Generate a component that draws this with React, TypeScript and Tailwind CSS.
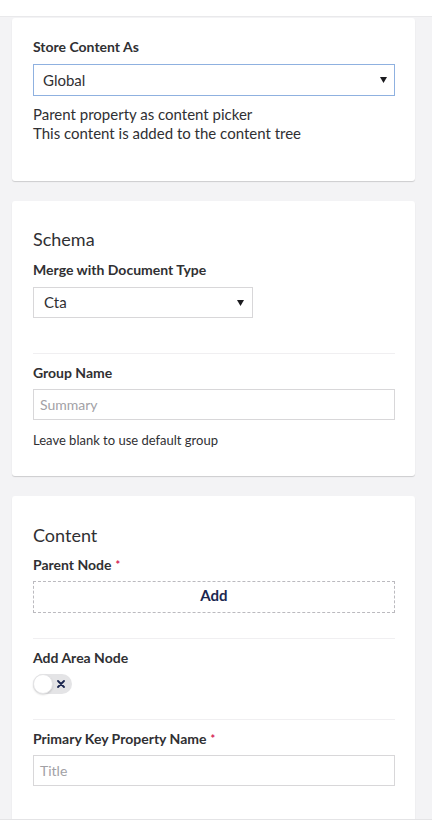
import React from "react";

const font = { fontFamily: "Lato, 'Open Sans', Arial, sans-serif" };

function Card({ children, className }: { children: React.ReactNode; className?: string }) {
  return (
    <div className={"mx-[12px] w-[403px] rounded-[3px] bg-white pl-[21px] pr-[20px] shadow-[0_1px_1px_rgba(0,0,0,0.16)] flex flex-col " + (className ?? "")}>
      {children}
    </div>
  );
}

function Label({ text, required, className }: { text: string; required?: boolean; className?: string }) {
  return (
    <div className={"text-[14px] leading-[20px] font-bold text-[#303033] " + (className ?? "")}>
      {text}
      {required && <span className="ml-[4px] text-[#d42054] font-bold text-[11px] align-top">*</span>}
    </div>
  );
}

function Caret() {
  return (
    <svg width="7" height="6" viewBox="0 0 7 6">
      <path d="M0 0 H7 L3.5 6 Z" fill="#1b1b1f" />
    </svg>
  );
}

function Divider({ className }: { className?: string }) {
  return <div className={"h-px w-full bg-[#f0eff1] " + (className ?? "")} />;
}

export default function App() {
  return (
    <div style={font} className="h-[828px] w-[432px] overflow-hidden flex flex-col bg-[#f3f3f5]">
      <div className="h-[17px] shrink-0 bg-white border-b border-[#e9e9eb]" />
      <div className="flex-1 overflow-hidden flex flex-col pt-[1px]">
        <Card className="pt-[19px] pb-[38px] shrink-0">
          <Label text="Store Content As" />
          <div className="mt-[7px] h-[32px] w-[362px] border border-[#8fb1e0] flex items-center justify-between pl-[9px] pr-[7px]">
            <span className="text-[15px] text-[#303033]">Global</span>
            <Caret />
          </div>
          <div className="mt-[9px] text-[15px] leading-[19px] text-[#303033]">
            <div>Parent property as content picker</div>
            <div>This content is added to the content tree</div>
          </div>
        </Card>

        <Card className="mt-[20px] pt-[26px] pb-[27px] shrink-0">
          <div className="text-[18px] leading-[24px] text-[#303033]">Schema</div>
          <Label text="Merge with Document Type" className="mt-[9px]" />
          <div className="mt-[7px] h-[31px] w-[220px] border border-[#d8d7d9] flex items-center justify-between pl-[10px] pr-[8px]">
            <span className="text-[15px] text-[#303033]">Cta</span>
            <Caret />
          </div>
          <Divider className="mt-[35px]" />
          <Label text="Group Name" className="mt-[9px]" />
          <div className="mt-[6px] h-[31px] w-[362px] border border-[#d8d7d9] flex items-center pl-[6px]">
            <span className="text-[14px] text-[#a2a1a6]">Summary</span>
          </div>
          <div className="mt-[11px] text-[13px] leading-[18px] text-[#303033]">Leave blank to use default group</div>
        </Card>

        <Card className="mt-[20px] pt-[27px] pb-[40px] shrink-0">
          <div className="text-[18px] leading-[24px] text-[#303033]">Content</div>
          <Label text="Parent Node" required className="mt-[8px]" />
          <div className="mt-[6px] h-[32px] w-[362px] border border-dashed border-[#bbbabf] flex items-center justify-center pb-[3px]">
            <span className="text-[15px] font-bold text-[#1b264f]">Add</span>
          </div>
          <Divider className="mt-[25px]" />
          <Label text="Add Area Node" className="mt-[9px]" />
          <div className="mt-[6px] relative h-[20px] w-[39px] rounded-full bg-[#e4e4e6] flex items-center">
            <div className="absolute left-0 top-0 h-[20px] w-[20px] rounded-full bg-white border border-[#e4e4e6] shadow-[0_1px_2px_rgba(0,0,0,0.15)]" />
            <svg className="absolute left-[24px] top-[6px]" width="8" height="8" viewBox="0 0 8 8">
              <path d="M1 1 L7 7 M7 1 L1 7" stroke="#1b264f" strokeWidth="1.8" strokeLinecap="round" />
            </svg>
          </div>
          <Divider className="mt-[25px]" />
          <Label text="Primary Key Property Name" required className="mt-[9px]" />
          <div className="mt-[6px] h-[31px] w-[362px] border border-[#d8d7d9] flex items-center pl-[6px]">
            <span className="text-[14px] text-[#a2a1a6]">Title</span>
          </div>
        </Card>
      </div>
      <div className="h-[9px] shrink-0 bg-white border-t border-[#e4e4e6]" />
    </div>
  );
}
